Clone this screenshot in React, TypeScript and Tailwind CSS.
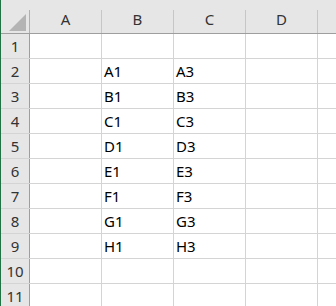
import React from "react";

const columns = ["A", "B", "C", "D"];
const rows = [1, 2, 3, 4, 5, 6, 7, 8, 9, 10, 11];

const data: Record<number, { B: string; C: string }> = {
  2: { B: "A1", C: "A3" },
  3: { B: "B1", C: "B3" },
  4: { B: "C1", C: "C3" },
  5: { B: "D1", C: "D3" },
  6: { B: "E1", C: "E3" },
  7: { B: "F1", C: "F3" },
  8: { B: "G1", C: "G3" },
  9: { B: "H1", C: "H3" },
};

const App: React.FC = () => {
  return (
    <div
      className="w-[336px] h-[306px] overflow-hidden bg-white border-l border-[#217346] text-[15px] text-black"
      style={{ fontFamily: '"Noto Sans", "Liberation Sans", sans-serif' }}
    >
      {/* Column headers */}
      <div className="flex h-[34px] bg-[#e6e6e6] border-b border-[#9e9e9e]">
        <div className="w-[29px] shrink-0 flex">
          <div className="flex-1 flex items-start pt-[14px] pl-[8px]">
            <svg width="18" height="17" viewBox="0 0 18 17">
              <polygon points="17,0 17,17 0,17" fill="#b4b4b4" />
            </svg>
          </div>
          <div className="w-px mt-[10px] bg-[#b0b0b0]" />
        </div>
        {columns.map((col) => (
          <div key={col} className="w-[72px] shrink-0 flex">
            <div className="flex-1 flex items-center justify-center pt-[6px] text-[#333]">
              {col}
            </div>
            <div className="w-px mt-[10px] bg-[#c6c6c6]" />
          </div>
        ))}
        <div className="flex-1" />
      </div>

      {/* Rows */}
      {rows.map((r) => (
        <div key={r} className="flex h-[25px] border-b border-[#d4d4d4]">
          <div className="w-[29px] shrink-0 bg-[#e6e6e6] border-r border-[#9e9e9e] flex items-center justify-center text-[#333]">
            {r}
          </div>
          {columns.map((col) => (
            <div
              key={col}
              className="w-[72px] shrink-0 border-r border-[#d4d4d4] flex items-center pl-[2px] pt-[1px]"
            >
              {col === "B" || col === "C" ? data[r]?.[col] ?? "" : ""}
            </div>
          ))}
          <div className="flex-1" />
        </div>
      ))}
    </div>
  );
};

export default App;
